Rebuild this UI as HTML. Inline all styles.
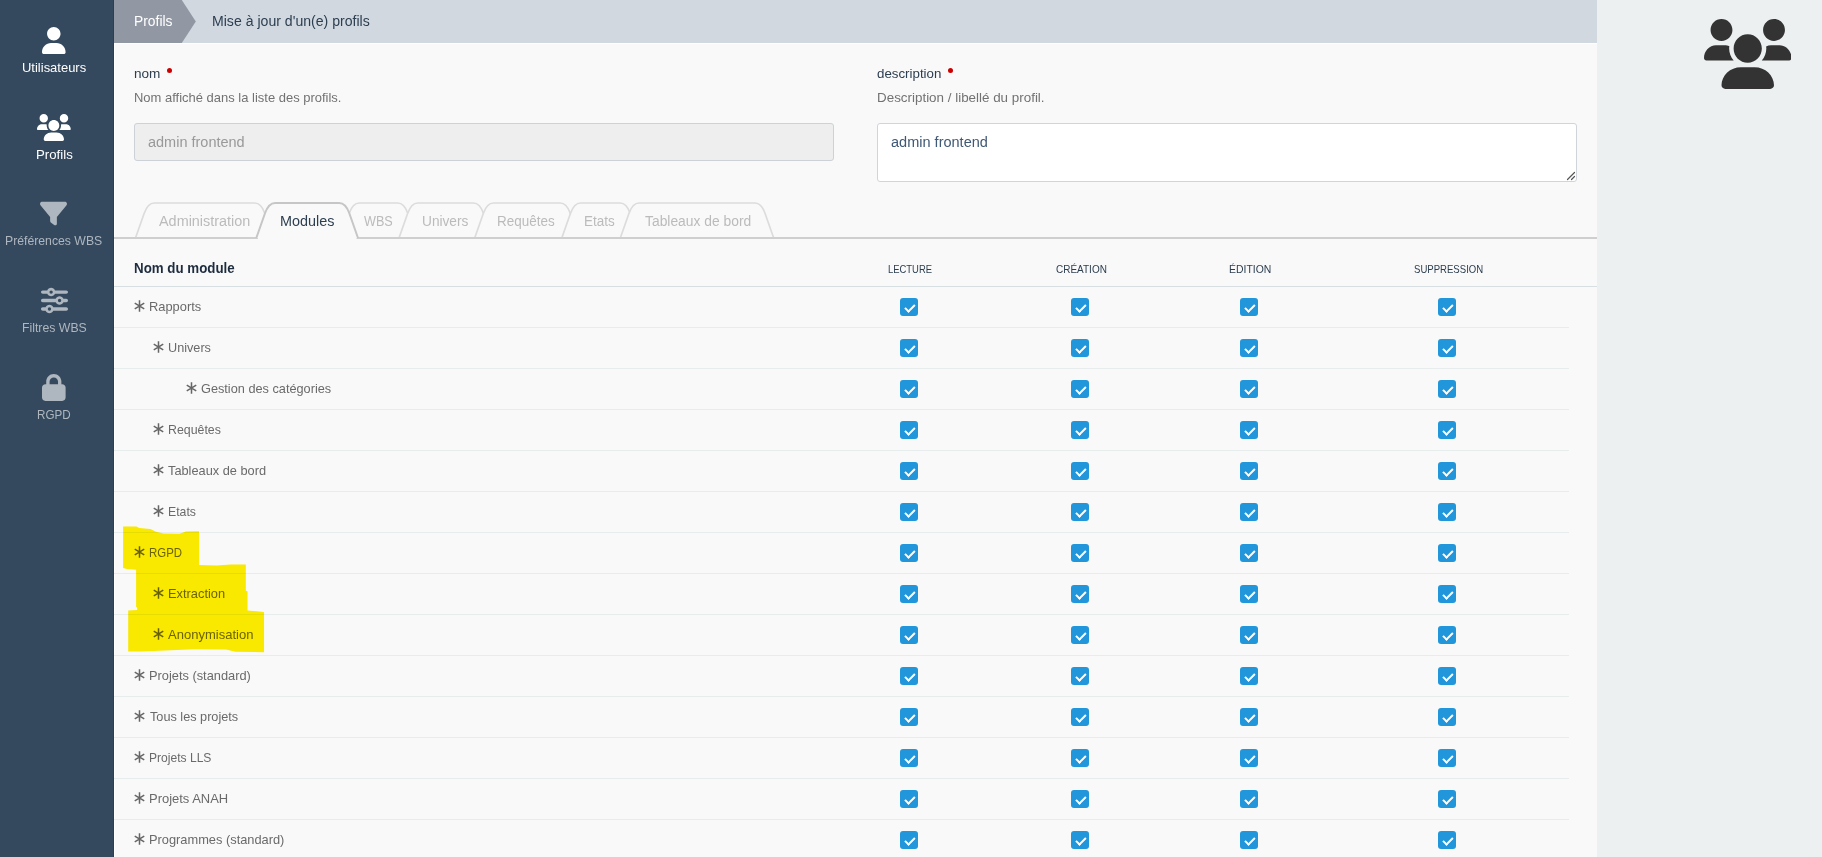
<!DOCTYPE html>
<html lang="fr">
<head>
<meta charset="utf-8">
<title>Profils</title>
<style>
*{box-sizing:border-box;margin:0;padding:0}
html,body{width:1822px;height:857px;overflow:hidden;background:#f9f9f9}
body{font-family:"Liberation Sans",sans-serif;font-size:13px;color:#333;position:relative}
.x{position:absolute;white-space:nowrap;line-height:18px;transform-origin:0 50%}
.ic{position:absolute;display:block}
#side{position:absolute;left:0;top:0;width:114px;height:857px;background:#34495e;border-right:1px solid #2c3e50}
#wl{position:absolute;left:114px;top:43px;width:1483px;height:814px;border-top:1px solid #fff;border-left:1px solid #fff}
#crumb{position:absolute;left:114px;top:0;width:1483px;height:43px;background:#d1d8e0}
#right{position:absolute;left:1597px;top:0;width:225px;height:857px;background:#ecf0f1}
.req{position:absolute;width:5px;height:5px;border-radius:50%;background:#c00}
.inp{position:absolute;left:134px;top:123px;width:700px;height:38px;border:1px solid #ccd2d7;border-radius:3px;background:#eee}
.ta{position:absolute;left:877px;top:123px;width:700px;height:59px;border:1px solid #cfd5da;border-radius:3px;background:#fff}
.hline{position:absolute;left:114px;top:286px;width:1483px;height:1px;background:#d8dfe2}
.row{position:absolute;left:114px;width:1455px;height:41px;border-bottom:1px solid #e7ecec}
.as{position:absolute;top:12.6px;display:block}
.as path{stroke:#666;stroke-width:1.5;fill:none;stroke-linecap:butt}
.cb{position:absolute;top:11px;width:18px;height:18px;border-radius:3px;background:#2196db}
.cb::after{content:"";position:absolute;box-sizing:border-box;left:6.64px;top:3.62px;width:5.5px;height:10px;border:solid #fff;border-width:0 2px 2px 0;transform:rotate(45deg)}
#hl{position:absolute;left:0;top:0;mix-blend-mode:multiply}
</style>
</head>
<body>
<div id="side"></div>
<div id="wl"></div>
<nav>
<svg class="ic" style="left:42.19px;top:26.70px" width="23.62" height="27" viewBox="0 0 448 512"><path fill="#fff" d="M224 256c70.7 0 128-57.310 128-128s-57.300-128-128-128C153.300 0 96 57.310 96 128S153.300 256 224 256zM274.700 304H173.300C77.610 304 0 381.600 0 477.300c0 19.140 15.520 34.670 34.660 34.670h378.700C432.500 512 448 496.500 448 477.300C448 381.600 370.400 304 274.700 304z"/></svg>
<svg class="ic" style="left:37.12px;top:113.70px" width="33.75" height="27" viewBox="0 0 640 512"><path fill="#fff" d="M319.9 320c57.410 0 103.100-46.560 103.100-104c0-57.440-46.540-104-103.100-104c-57.410 0-103.100 46.560-103.100 104C215.900 273.400 262.500 320 319.900 320zM369.900 352H270.100C191.600 352 128 411.700 128 485.300C128 500.100 140.700 512 156.400 512h327.200C499.300 512 512 500.100 512 485.300C512 411.700 448.400 352 369.900 352zM512 160c44.180 0 80-35.820 80-80S556.200 0 512 0c-44.180 0-80 35.820-80 80S467.800 160 512 160zM183.900 216c0-5.449 .9824-10.630 1.609-15.910C174.600 194.100 162.600 192 149.900 192H88.080C39.440 192 0 233.800 0 285.300C0 295.600 7.887 304 17.620 304h199.500C196.700 280.200 183.900 249.700 183.900 216zM128 160c44.180 0 80-35.820 80-80S172.200 0 128 0C83.820 0 48 35.820 48 80S83.820 160 128 160zM551.900 192h-61.840c-12.800 0-24.880 3.037-35.860 8.240C454.800 205.500 455.800 210.600 455.800 216c0 33.710-12.780 64.210-33.160 88h199.700C632.100 304 640 295.600 640 285.300C640 233.800 600.600 192 551.900 192z"/></svg>
<svg class="ic" style="left:40.20px;top:200.00px" width="27.00" height="27" viewBox="0 0 512 512"><path fill="#aeb6bf" d="M3.900 54.900C10.500 40.900 24.500 32 40 32H472c15.500 0 29.500 8.900 36.100 22.900s4.600 30.500-5.200 42.500L320 320.900V448c0 12.100-6.800 23.200-17.700 28.600s-23.800 4.300-33.500-3l-64-48c-8.100-6-12.800-15.500-12.800-25.600V320.900L9 97.300C-.7 85.400-2.800 68.800 3.900 54.900z"/></svg>
<svg class="ic" style="left:40.50px;top:286.90px" width="27.00" height="27" viewBox="0 0 512 512"><path fill="#aeb6bf" d="M0 416c0 17.700 14.300 32 32 32l54.700 0c12.300 28.300 40.500 48 73.300 48s61-19.700 73.300-48L480 448c17.700 0 32-14.300 32-32s-14.300-32-32-32l-246.700 0c-12.300-28.300-40.500-48-73.300-48s-61 19.700-73.300 48L32 384c-17.700 0-32 14.300-32 32zm128 0a32 32 0 1 1 64 0 32 32 0 1 1 -64 0zM320 256a32 32 0 1 1 64 0 32 32 0 1 1 -64 0zm32-80c-32.800 0-61 19.700-73.300 48L32 224c-17.700 0-32 14.300-32 32s14.300 32 32 32l246.700 0c12.300 28.300 40.500 48 73.300 48s61-19.700 73.300-48l54.700 0c17.700 0 32-14.300 32-32s-14.300-32-32-32l-54.700 0c-12.300-28.300-40.500-48-73.300-48zM192 128a32 32 0 1 1 0-64 32 32 0 1 1 0 64zm73.300-64C253 35.700 224.800 16 192 16s-61 19.700-73.300 48L32 64C14.300 64 0 78.300 0 96s14.300 32 32 32l86.700 0c12.300 28.300 40.500 48 73.300 48s61-19.700 73.300-48L480 128c17.700 0 32-14.300 32-32s-14.300-32-32-32L265.300 64z"/></svg>
<svg class="ic" style="left:42.19px;top:373.90px" width="23.62" height="27" viewBox="0 0 448 512"><path fill="#aeb6bf" d="M144 144v48H304V144c0-44.200-35.800-80-80-80s-80 35.800-80 80zM80 192V144C80 64.500 144.500 0 224 0s144 64.500 144 144v48h16c35.300 0 64 28.700 64 64V448c0 35.300-28.700 64-64 64H64c-35.300 0-64-28.700-64-64V256c0-35.300 28.700-64 64-64H80z"/></svg>
<span class="x" style="left:22.08px;top:59px;font-size:13px;color:#fff;transform:scaleX(0.9982)">Utilisateurs</span>
<span class="x" style="left:35.93px;top:146px;font-size:13px;color:#fff;transform:scaleX(1.0173)">Profils</span>
<span class="x" style="left:5.41px;top:232px;font-size:13px;color:#aeb6bf;transform:scaleX(0.9410)">Préférences WBS</span>
<span class="x" style="left:21.71px;top:319px;font-size:13px;color:#aeb6bf;transform:scaleX(0.9439)">Filtres WBS</span>
<span class="x" style="left:37.05px;top:406px;font-size:13px;color:#aeb6bf;transform:scaleX(0.8958)">RGPD</span>
</nav>
<header>
<div id="crumb"><svg class="ic" style="left:0;top:0" width="90" height="43" viewBox="0 0 90 43"><polygon points="0,0 67.8,0 81.8,21.5 67.8,43 0,43" fill="#9198a3"/></svg></div>
<span class="x" style="left:133.54px;top:12px;font-size:14px;color:#fff;transform:scaleX(0.9890)">Profils</span>
<span class="x" style="left:212.02px;top:12px;font-size:14px;color:#2c3e50;transform:scaleX(1.0068)">Mise à jour d'un(e) profils</span>
</header>
<aside>
<div id="right"></div>
<svg class="ic" style="left:1703.85px;top:18.90px" width="87.50" height="70" viewBox="0 0 640 512"><path fill="#333" d="M319.9 320c57.410 0 103.100-46.560 103.100-104c0-57.440-46.540-104-103.100-104c-57.410 0-103.100 46.560-103.100 104C215.900 273.400 262.500 320 319.900 320zM369.900 352H270.100C191.600 352 128 411.700 128 485.300C128 500.100 140.700 512 156.400 512h327.200C499.300 512 512 500.100 512 485.300C512 411.700 448.400 352 369.900 352zM512 160c44.180 0 80-35.820 80-80S556.200 0 512 0c-44.180 0-80 35.820-80 80S467.800 160 512 160zM183.900 216c0-5.449 .9824-10.630 1.609-15.910C174.600 194.100 162.600 192 149.900 192H88.080C39.440 192 0 233.800 0 285.300C0 295.600 7.887 304 17.620 304h199.500C196.700 280.200 183.900 249.700 183.900 216zM128 160c44.180 0 80-35.820 80-80S172.200 0 128 0C83.820 0 48 35.820 48 80S83.820 160 128 160zM551.900 192h-61.840c-12.800 0-24.880 3.037-35.860 8.240C454.800 205.500 455.800 210.600 455.800 216c0 33.710-12.780 64.210-33.160 88h199.700C632.100 304 640 295.600 640 285.300C640 233.800 600.600 192 551.900 192z"/></svg>
</aside>
<main>
<section>
<div class="inp"></div>
<div class="ta"><svg class="ic" style="right:0;bottom:0" width="11" height="11" viewBox="0 0 11 11"><path d="M2.5 9.5L9.5 2.5M6.5 9.5L9.5 6.5" stroke="#555" stroke-width="1.2" stroke-linecap="round" fill="none"/></svg></div>
<i class="req" style="left:167px;top:68px"></i>
<i class="req" style="left:948px;top:68px"></i>
<span class="x" style="left:133.82px;top:65px;font-size:13px;color:#2c3e50;transform:scaleX(1.0449)">nom</span>
<span class="x" style="left:133.75px;top:89px;font-size:13px;color:#727272;transform:scaleX(0.9980)">Nom affiché dans la liste des profils.</span>
<span class="x" style="left:148.36px;top:133px;font-size:14px;color:#999;transform:scaleX(1.0347)">admin frontend</span>
<span class="x" style="left:877.24px;top:65px;font-size:13px;color:#2c3e50;transform:scaleX(1.0236)">description</span>
<span class="x" style="left:876.72px;top:89px;font-size:13px;color:#727272;transform:scaleX(1.0306)">Description / libellé du profil.</span>
<span class="x" style="left:891.23px;top:133px;font-size:14px;color:#3f5875;transform:scaleX(1.0375)">admin frontend</span>
</section>
<section>
<svg class="ic" style="left:0;top:0" width="1822" height="250" viewBox="0 0 1822 250">
<path d="M135.5 238.0 L144.11 213.5 Q147.80 203.0 154.30 203.0 L254.70 203.0 Q261.20 203.0 264.89 213.5 L273.5 238.0" fill="#f9f9f9" stroke="#dcdcdc" stroke-width="1.7" stroke-linejoin="round"/>
<path d="M340.5 238.0 L349.11 213.5 Q352.80 203.0 359.30 203.0 L397.70 203.0 Q404.20 203.0 407.89 213.5 L416.5 238.0" fill="#f9f9f9" stroke="#dcdcdc" stroke-width="1.7" stroke-linejoin="round"/>
<path d="M399.0 238.0 L407.61 213.5 Q411.30 203.0 417.80 203.0 L473.40 203.0 Q479.90 203.0 483.59 213.5 L492.2 238.0" fill="#f9f9f9" stroke="#dcdcdc" stroke-width="1.7" stroke-linejoin="round"/>
<path d="M474.7 238.0 L483.31 213.5 Q487.00 203.0 493.50 203.0 L560.20 203.0 Q566.70 203.0 570.39 213.5 L579.0 238.0" fill="#f9f9f9" stroke="#dcdcdc" stroke-width="1.7" stroke-linejoin="round"/>
<path d="M561.8 238.0 L570.41 213.5 Q574.10 203.0 580.60 203.0 L620.10 203.0 Q626.60 203.0 630.29 213.5 L638.9 238.0" fill="#f9f9f9" stroke="#dcdcdc" stroke-width="1.7" stroke-linejoin="round"/>
<path d="M620.3 238.0 L628.91 213.5 Q632.60 203.0 639.10 203.0 L754.90 203.0 Q761.40 203.0 765.09 213.5 L773.7 238.0" fill="#f9f9f9" stroke="#dcdcdc" stroke-width="1.7" stroke-linejoin="round"/>
<path d="M114 238H1597" stroke="#cfcfcf" stroke-width="2" fill="none"/>
<path d="M256.3 238.0 L264.91 213.5 Q268.60 203.0 275.10 203.0 L339.20 203.0 Q345.70 203.0 349.39 213.5 L358.0 238.0" fill="#f9f9f9" stroke="none"/>
<path d="M257.8 238H356.5" stroke="#f9f9f9" stroke-width="3" fill="none"/>
<path d="M256.3 238.0 L264.91 213.5 Q268.60 203.0 275.10 203.0 L339.20 203.0 Q345.70 203.0 349.39 213.5 L358.0 238.0" fill="none" stroke="#c6c6c6" stroke-width="2" stroke-linejoin="round"/>
</svg>
<span class="x" style="left:159.45px;top:212px;font-size:14px;color:#bbb;transform:scaleX(1.0296)">Administration</span>
<span class="x" style="left:279.85px;top:212px;font-size:14px;color:#2c3e50;transform:scaleX(1.0293)">Modules</span>
<span class="x" style="left:363.54px;top:212px;font-size:14px;color:#bbb;transform:scaleX(0.9025)">WBS</span>
<span class="x" style="left:421.97px;top:212px;font-size:14px;color:#bbb;transform:scaleX(0.9772)">Univers</span>
<span class="x" style="left:497.35px;top:212px;font-size:14px;color:#bbb;transform:scaleX(0.9622)">Requêtes</span>
<span class="x" style="left:584.25px;top:212px;font-size:14px;color:#bbb;transform:scaleX(0.9617)">Etats</span>
<span class="x" style="left:644.87px;top:212px;font-size:14px;color:#bbb;transform:scaleX(0.9895)">Tableaux de bord</span>
</section>
<section>
<div class="hline"></div>
<span class="x" style="left:133.88px;top:259px;font-size:14px;color:#1e2c3f;transform:scaleX(0.9521);font-weight:700">Nom du module</span>
<span class="x" style="left:887.83px;top:260px;font-size:11.5px;color:#2c3e50;transform:scaleX(0.8201)">LECTURE</span>
<span class="x" style="left:1056.37px;top:260px;font-size:11.5px;color:#2c3e50;transform:scaleX(0.8685)">CRÉATION</span>
<span class="x" style="left:1229.05px;top:260px;font-size:11.5px;color:#2c3e50;transform:scaleX(0.9064)">ÉDITION</span>
<span class="x" style="left:1413.83px;top:260px;font-size:11.5px;color:#2c3e50;transform:scaleX(0.8324)">SUPPRESSION</span>
<div class="row" style="top:287px"><svg class="as" style="left:20.4px" width="11" height="12" viewBox="0 0 11 12"><path d="M5.5 .3v11.400M.75 3.150l9.500 5.700M10.250 3.150l-9.500 5.700"/></svg><b class="cb" style="left:786px"></b><b class="cb" style="left:957px"></b><b class="cb" style="left:1126px"></b><b class="cb" style="left:1324px"></b></div>
<div class="row" style="top:328px"><svg class="as" style="left:39.2px" width="11" height="12" viewBox="0 0 11 12"><path d="M5.5 .3v11.400M.75 3.150l9.500 5.700M10.250 3.150l-9.500 5.700"/></svg><b class="cb" style="left:786px"></b><b class="cb" style="left:957px"></b><b class="cb" style="left:1126px"></b><b class="cb" style="left:1324px"></b></div>
<div class="row" style="top:369px"><svg class="as" style="left:71.8px" width="11" height="12" viewBox="0 0 11 12"><path d="M5.5 .3v11.400M.75 3.150l9.500 5.700M10.250 3.150l-9.500 5.700"/></svg><b class="cb" style="left:786px"></b><b class="cb" style="left:957px"></b><b class="cb" style="left:1126px"></b><b class="cb" style="left:1324px"></b></div>
<div class="row" style="top:410px"><svg class="as" style="left:39.2px" width="11" height="12" viewBox="0 0 11 12"><path d="M5.5 .3v11.400M.75 3.150l9.500 5.700M10.250 3.150l-9.500 5.700"/></svg><b class="cb" style="left:786px"></b><b class="cb" style="left:957px"></b><b class="cb" style="left:1126px"></b><b class="cb" style="left:1324px"></b></div>
<div class="row" style="top:451px"><svg class="as" style="left:39.2px" width="11" height="12" viewBox="0 0 11 12"><path d="M5.5 .3v11.400M.75 3.150l9.500 5.700M10.250 3.150l-9.500 5.700"/></svg><b class="cb" style="left:786px"></b><b class="cb" style="left:957px"></b><b class="cb" style="left:1126px"></b><b class="cb" style="left:1324px"></b></div>
<div class="row" style="top:492px"><svg class="as" style="left:39.2px" width="11" height="12" viewBox="0 0 11 12"><path d="M5.5 .3v11.400M.75 3.150l9.500 5.700M10.250 3.150l-9.500 5.700"/></svg><b class="cb" style="left:786px"></b><b class="cb" style="left:957px"></b><b class="cb" style="left:1126px"></b><b class="cb" style="left:1324px"></b></div>
<div class="row" style="top:533px"><svg class="as" style="left:20.4px" width="11" height="12" viewBox="0 0 11 12"><path d="M5.5 .3v11.400M.75 3.150l9.500 5.700M10.250 3.150l-9.500 5.700"/></svg><b class="cb" style="left:786px"></b><b class="cb" style="left:957px"></b><b class="cb" style="left:1126px"></b><b class="cb" style="left:1324px"></b></div>
<div class="row" style="top:574px"><svg class="as" style="left:39.2px" width="11" height="12" viewBox="0 0 11 12"><path d="M5.5 .3v11.400M.75 3.150l9.500 5.700M10.250 3.150l-9.500 5.700"/></svg><b class="cb" style="left:786px"></b><b class="cb" style="left:957px"></b><b class="cb" style="left:1126px"></b><b class="cb" style="left:1324px"></b></div>
<div class="row" style="top:615px"><svg class="as" style="left:39.2px" width="11" height="12" viewBox="0 0 11 12"><path d="M5.5 .3v11.400M.75 3.150l9.500 5.700M10.250 3.150l-9.500 5.700"/></svg><b class="cb" style="left:786px"></b><b class="cb" style="left:957px"></b><b class="cb" style="left:1126px"></b><b class="cb" style="left:1324px"></b></div>
<div class="row" style="top:656px"><svg class="as" style="left:20.4px" width="11" height="12" viewBox="0 0 11 12"><path d="M5.5 .3v11.400M.75 3.150l9.500 5.700M10.250 3.150l-9.500 5.700"/></svg><b class="cb" style="left:786px"></b><b class="cb" style="left:957px"></b><b class="cb" style="left:1126px"></b><b class="cb" style="left:1324px"></b></div>
<div class="row" style="top:697px"><svg class="as" style="left:20.4px" width="11" height="12" viewBox="0 0 11 12"><path d="M5.5 .3v11.400M.75 3.150l9.500 5.700M10.250 3.150l-9.500 5.700"/></svg><b class="cb" style="left:786px"></b><b class="cb" style="left:957px"></b><b class="cb" style="left:1126px"></b><b class="cb" style="left:1324px"></b></div>
<div class="row" style="top:738px"><svg class="as" style="left:20.4px" width="11" height="12" viewBox="0 0 11 12"><path d="M5.5 .3v11.400M.75 3.150l9.500 5.700M10.250 3.150l-9.500 5.700"/></svg><b class="cb" style="left:786px"></b><b class="cb" style="left:957px"></b><b class="cb" style="left:1126px"></b><b class="cb" style="left:1324px"></b></div>
<div class="row" style="top:779px"><svg class="as" style="left:20.4px" width="11" height="12" viewBox="0 0 11 12"><path d="M5.5 .3v11.400M.75 3.150l9.500 5.700M10.250 3.150l-9.500 5.700"/></svg><b class="cb" style="left:786px"></b><b class="cb" style="left:957px"></b><b class="cb" style="left:1126px"></b><b class="cb" style="left:1324px"></b></div>
<div class="row" style="top:820px"><svg class="as" style="left:20.4px" width="11" height="12" viewBox="0 0 11 12"><path d="M5.5 .3v11.400M.75 3.150l9.500 5.700M10.250 3.150l-9.500 5.700"/></svg><b class="cb" style="left:786px"></b><b class="cb" style="left:957px"></b><b class="cb" style="left:1126px"></b><b class="cb" style="left:1324px"></b></div>
<span class="x" style="left:148.91px;top:298px;font-size:13px;color:#6a6a6a;transform:scaleX(0.9897)">Rapports</span>
<span class="x" style="left:167.75px;top:339px;font-size:13px;color:#6a6a6a;transform:scaleX(0.9747)">Univers</span>
<span class="x" style="left:200.81px;top:380px;font-size:13px;color:#6a6a6a;transform:scaleX(0.9789)">Gestion des catégories</span>
<span class="x" style="left:167.60px;top:421px;font-size:13px;color:#6a6a6a;transform:scaleX(0.9502)">Requêtes</span>
<span class="x" style="left:168.44px;top:462px;font-size:13px;color:#6a6a6a;transform:scaleX(0.9830)">Tableaux de bord</span>
<span class="x" style="left:167.61px;top:503px;font-size:13px;color:#6a6a6a;transform:scaleX(0.9434)">Etats</span>
<span class="x" style="left:148.87px;top:544px;font-size:13px;color:#6a6a6a;transform:scaleX(0.8792)">RGPD</span>
<span class="x" style="left:167.62px;top:585px;font-size:13px;color:#6a6a6a;transform:scaleX(0.9885)">Extraction</span>
<span class="x" style="left:168.20px;top:626px;font-size:13px;color:#6a6a6a;transform:scaleX(1.0012)">Anonymisation</span>
<span class="x" style="left:148.61px;top:667px;font-size:13px;color:#6a6a6a;transform:scaleX(0.9854)">Projets (standard)</span>
<span class="x" style="left:149.67px;top:708px;font-size:13px;color:#6a6a6a;transform:scaleX(0.9761)">Tous les projets</span>
<span class="x" style="left:148.82px;top:749px;font-size:13px;color:#6a6a6a;transform:scaleX(0.9285)">Projets LLS</span>
<span class="x" style="left:148.75px;top:790px;font-size:13px;color:#6a6a6a;transform:scaleX(0.9970)">Projets ANAH</span>
<span class="x" style="left:148.76px;top:831px;font-size:13px;color:#6a6a6a;transform:scaleX(0.9863)">Programmes (standard)</span>
<svg id="hl" width="400" height="700" viewBox="0 0 400 700"><polygon points="123.1,526.4 136.4,526.4 139.2,527.9 150.4,528.9 156,531.7 163.5,533.5 179.4,533.8 183.1,532.6 185.9,531.4 199,531.2 199,565.1 216.7,565.5 230.7,564.4 245.8,564.4 245.8,590.7 247.5,591.3 247.5,610.4 264.05,612 264.05,652.2 235.4,651.8 226,649.4 193.4,649.2 165.4,650.4 142,651.5 128.2,651.5 128.2,610.4 137.2,610 137.2,607.4 136.1,606.9 136.1,569.7 127.1,569 123.1,568.1" fill="#ffee00"/></svg>
</section>
</main>
</body>
</html>
